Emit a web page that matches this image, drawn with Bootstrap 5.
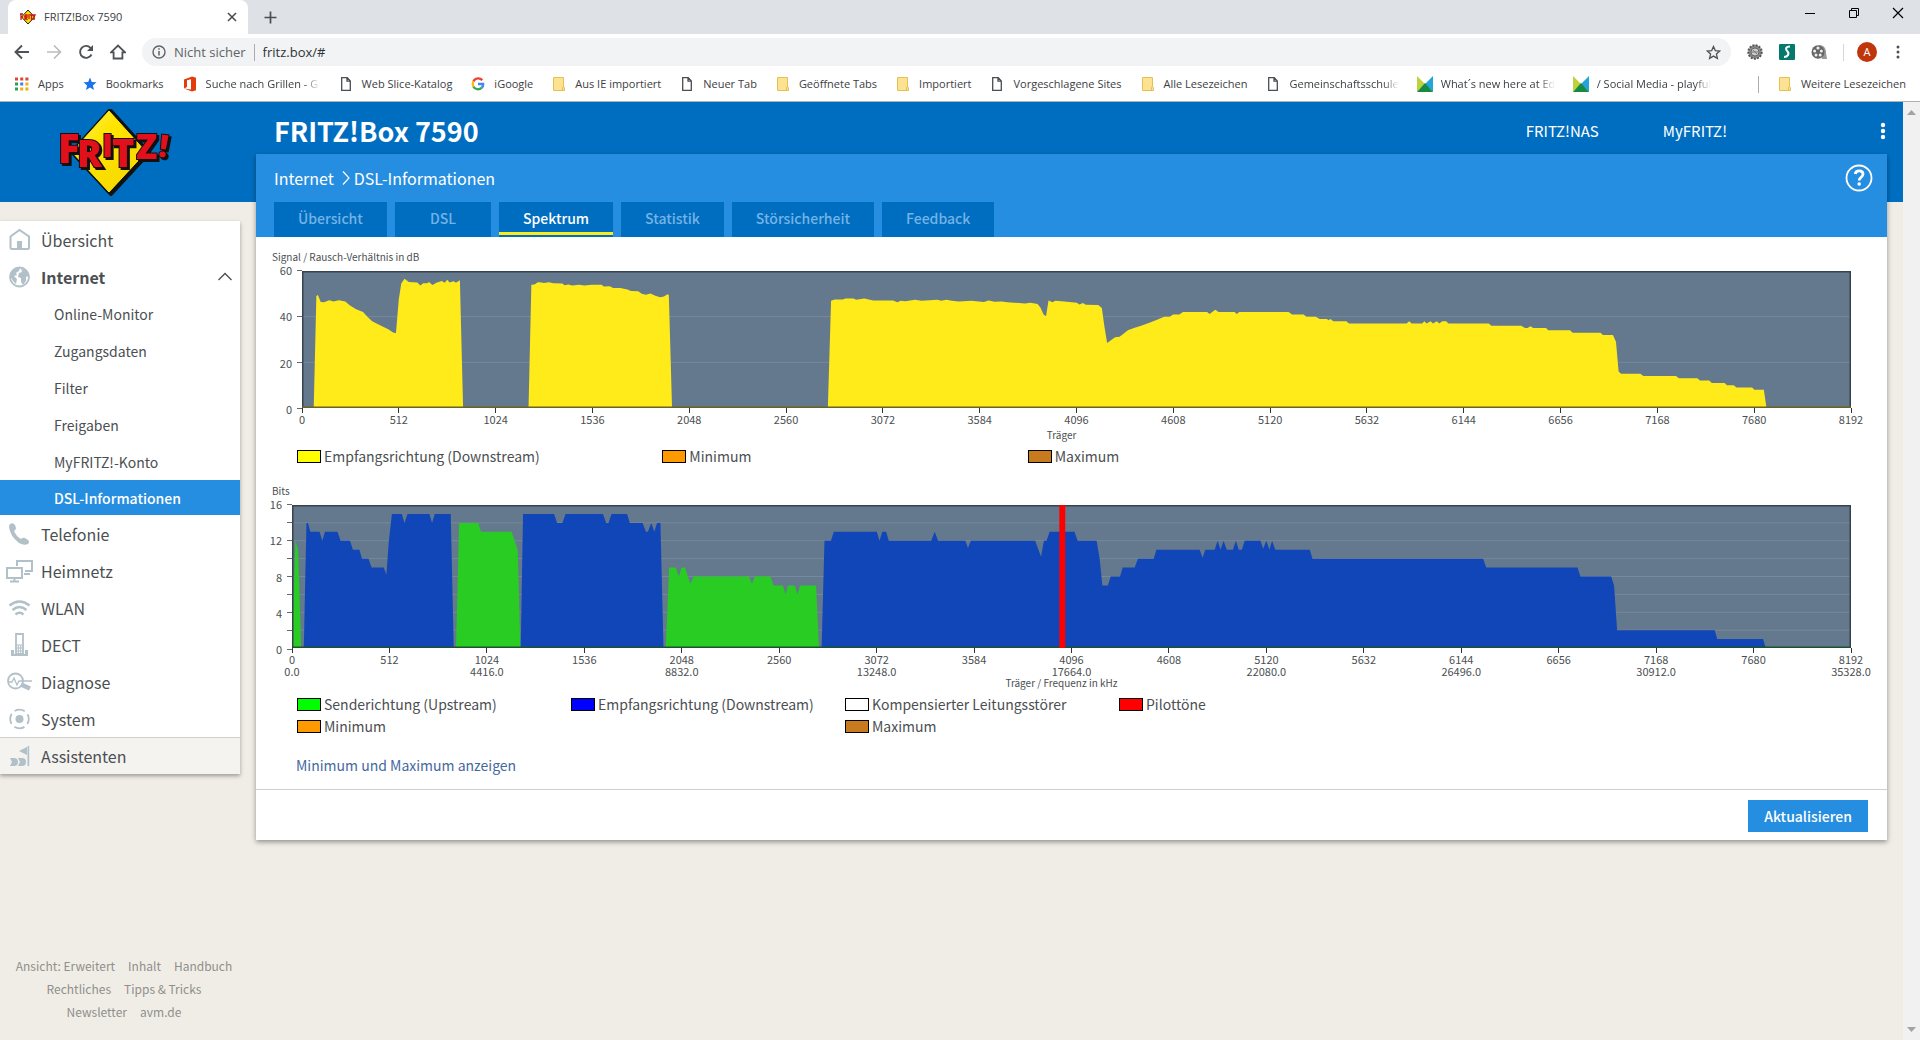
<!DOCTYPE html>
<html lang="de">
<head>
<meta charset="utf-8">
<meta name="viewport" content="width=device-width, initial-scale=1">
<title>FRITZ!Box 7590</title>
<link href="https://cdn.jsdelivr.net/npm/bootstrap@5.3.0/dist/css/bootstrap.min.css" rel="stylesheet">
<style>
:root{--fb-dark:#006ec0;--fb-light:#268ee0;--fb-text:#4b4f52;--fb-icon:#b2c0c8;}
body{font-family:"Noto Sans CJK SC","Noto Sans",sans-serif;font-size:14px;line-height:22px;color:var(--fb-text);background:#f0ede6;}
svg{display:block;flex-shrink:0}
a{text-decoration:none}
/* browser frame */
.chrome-ui{font-family:"Open Sans","Noto Sans",sans-serif;font-size:11px;line-height:16px;color:#3c4043;background:#fff;border-bottom:1px solid #b0b3b6}
.chrome-ui button{background:none;border:0;padding:0;color:#5f6368}
.tab-strip{height:34px;background:#dee1e6;padding-left:8px}
.browser-tab{width:240px;background:#fff;border-radius:8px 8px 0 0;padding:0 10px 0 12px}
.win-buttons{gap:32px;padding-right:16px}
.chrome-ui .win-buttons button{color:#000}
.tool-row{height:36px;padding:4px 14px}
.tool-group{gap:13px}
.omnibox{height:28px;border-radius:14px;background:#f1f3f4;padding:0 10px;color:#5f6368;font-size:13px}
.omnibox input{border:0;background:none;outline:0;padding:0;color:#303336;min-width:0}
.vline{width:1px;height:17px;background:#a9adb1}
.bookmark-row{height:31px;padding:0 14px 3px;gap:18px}
.bookmark-row a{color:#3c4043;display:flex;align-items:center;gap:8px;white-space:nowrap}
.cut span{max-width:114px;overflow:hidden;-webkit-mask-image:linear-gradient(90deg,#000 86%,transparent);mask-image:linear-gradient(90deg,#000 86%,transparent)}
.scroll-rail{width:17px;background:#f1f1f1;padding:6px 0}
/* router page */
.fb-page{background:linear-gradient(var(--fb-dark) 100px,transparent 100px)}
.fb-side{width:240px;flex-shrink:0}
.fb-logo{height:100px;margin-bottom:19px;padding-left:52px}
.fb-menu{background:#fff;box-shadow:0 2px 4px rgba(0,0,0,.35);font-size:16px}
.fb-menu a{display:flex;align-items:center;height:37px;color:var(--fb-text);padding-left:6px;gap:8px}
.fb-menu .sub{padding-left:54px;font-size:14px}
.fb-menu .sub.active{height:35px;background:var(--fb-light);color:#fff;font-weight:500}
.fb-menu .assist{background:#f4f3f0;border-top:1px solid #cfcfcf}
.side-foot{font-size:12px;line-height:23px;padding:0 4px 17px 12px;column-gap:13px}
.side-foot a{color:#8f8f8c}
.fb-main{margin:0 16px 0 16px}
.fb-top{height:52px;padding:6px 1px 0 18px;font-size:15px}
.fb-top h1{font-size:27px;line-height:40px;font-weight:700}
.fb-top a{color:#fff}
.fb-top .shortcuts{gap:64px;margin-right:153px}
.fb-card{background:#fff;box-shadow:0 2px 5px rgba(0,0,0,.4)}
.fb-head{background:var(--fb-light);padding:0 14px 0 18px}
.crumbs{height:48px;font-size:16px}
.crumbs a,.crumbs span{color:#fff}
.fb-tabs{gap:8px}
.fb-tabs a{height:35px;padding:5px 24px;background:var(--fb-dark);color:#74b3e6;font-weight:500}
.fb-tabs a.active{color:#fff;background:linear-gradient(#0000 30px,#ffeb19 30px,#ffeb19 33px,#0000 33px) var(--fb-dark)}
.fb-tabs .short{padding:5px 35px}
.fb-body{padding:12px 36px 13px 16px}
.axis-name{font-size:10px;line-height:16px;margin-bottom:6px}
.ticks{font-size:11px;line-height:12px}
.y-axis{width:30px;margin-top:-1px;margin-bottom:-1px}
.chart-bits .y-axis{width:20px}
.y-axis div{height:0;display:flex;align-items:center;justify-content:flex-end;gap:5px}
.y-axis div::after{content:"";width:5px;height:1px;background:#667;flex-shrink:0}
.plot{height:137px}
.chart-bits .plot{height:143px}
.x-axis{margin-left:30px}
.chart-bits .x-axis{margin-left:20px}
.x-axis div{width:0;display:flex;flex-direction:column;align-items:center}
.x-axis div::before{content:"";width:1px;height:5px;background:#333}
.x-name{font-size:10px;line-height:12px}
.legend-box{margin-left:25px;width:1096px;max-width:100%}
.legend-box .item{display:flex;align-items:center;gap:3px}
.legend-box .w-33{width:33.333%}
.chip{width:24px;height:13px;border:1px solid #000}
.btn-fb{background:var(--fb-light);color:#fff;border:0;border-radius:0;font-size:14px;line-height:22px;padding:5px 16px;font-weight:500}
.mm-link{color:#44699f;margin-left:24px;margin-top:17px}
.fb-foot{border-top:1px solid #cfcfcf;padding:10px 19px 8px}
</style>
<script src="https://cdn.jsdelivr.net/npm/bootstrap@5.3.0/dist/js/bootstrap.bundle.min.js"></script>
</head>
<body class="d-flex flex-column min-vh-100">

<svg width="0" height="0" class="position-absolute" aria-hidden="true">
  <symbol id="i-page" viewBox="0 0 16 16"><path d="M3.7 1.7h5.600l3 3.200v9.400H3.700z M9 1.700v3.500h3.300" fill="none" stroke="#4a4d51" stroke-width="1.300"/></symbol>
  <symbol id="i-folder" viewBox="0 0 16 16"><path d="M2.500 1.500h10v9l1 1.500v2.500h-11z" fill="#fde293" stroke="#e3c04f"/><path d="M11.500 14.500v-3l1-1.500" fill="none" stroke="#e3c04f"/></symbol>
  <symbol id="i-tri" viewBox="0 0 16 16"><path d="M0 0l8 8-8 8z" fill="#bfd23b"/><path d="M16 0L8 8l8 8z" fill="#25a4dc"/><path d="M0 16l8-9 8 9z" fill="#158a43"/></symbol>
</svg>

<header class="chrome-ui">
  <div class="tab-strip d-flex align-items-stretch">
    <div class="browser-tab d-flex align-items-center">
      <svg width="16" height="16" viewBox="0 0 16 16"><path d="M8 1l6.500 7L8 15 1.500 8z" fill="#ffdd00" stroke="#222"/><path d="M0 5h3M1 5v6M1 8h2M5 6v5M5 6h2v2H5l2.500 3M9 5v5M10 6h3M11.500 6v5M13 6h2l-2 4h2" fill="none" stroke="#c8141c" stroke-width="1.300"/></svg>
      <span class="ms-2 flex-grow-1">FRITZ!Box 7590</span>
      <button aria-label="Tab schließen"><svg width="12" height="12" viewBox="0 0 12 12"><path d="M2 2l8 8M10 2l-8 8" stroke="#45494d" stroke-width="1.500"/></svg></button>
    </div>
    <button class="ms-3" aria-label="Neuer Tab"><svg width="13" height="13" viewBox="0 0 13 13"><path d="M6.500 .5v12M.5 6.500h12" stroke="#4a4e52" stroke-width="1.700"/></svg></button>
    <div class="win-buttons d-flex ms-auto pb-2 align-items-center">
      <button aria-label="Minimieren"><svg width="12" height="12" viewBox="0 0 12 12"><path d="M1 6.500h10" stroke="#000"/></svg></button>
      <button aria-label="Verkleinern"><svg width="12" height="12" viewBox="0 0 12 12"><path d="M1.500 3.500h7v7h-7zM3.500 3.500v-2h7v7h-2" fill="none" stroke="#000"/></svg></button>
      <button aria-label="Schließen"><svg width="12" height="12" viewBox="0 0 12 12"><path d="M1 1l10 10M11 1L1 11" stroke="#000" stroke-width="1.200"/></svg></button>
    </div>
  </div>
  <div class="tool-row d-flex align-items-center">
    <button aria-label="Zurück"><svg width="16" height="16" viewBox="0 0 16 16"><path d="M15 8H2M8 1.500L1.500 8 8 14.500" fill="none" stroke="#4e5256" stroke-width="1.900"/></svg></button>
    <button class="ms-3" aria-label="Vor"><svg width="16" height="16" viewBox="0 0 16 16"><path d="M1 8h13M8 1.500L14.500 8 8 14.500" fill="none" stroke="#babcbe" stroke-width="1.700"/></svg></button>
    <button class="ms-3" aria-label="Neu laden"><svg width="16" height="16" viewBox="0 0 16 16"><path d="M13.500 10.500A6 6 0 1 1 12.500 3.800L14 5.500" fill="none" stroke="#4e5256" stroke-width="1.900"/><path d="M15 1v6H9z" fill="#4e5256"/></svg></button>
    <button class="ms-3" aria-label="Startseite"><svg width="16" height="16" viewBox="0 0 16 16"><path d="M1 8.300L8 1.500l7 6.800h-2.600v6.200H3.600V8.300z" fill="none" stroke="#4e5256" stroke-width="1.800"/></svg></button>
    <div class="omnibox d-flex align-items-center flex-grow-1 ms-3">
      <svg width="14" height="14" viewBox="0 0 14 14"><circle cx="7" cy="7" r="6" fill="none" stroke="#5f6368" stroke-width="1.400"/><path d="M7 6v4.500M7 3.300v1.500" stroke="#5f6368" stroke-width="1.500"/></svg>
      <label for="addr" class="mx-2">Nicht sicher</label>
      <span class="vline me-2"></span>
      <input id="addr" type="text" value="fritz.box/#" class="flex-grow-1">
      <button aria-label="Lesezeichen"><svg width="15" height="15" viewBox="0 0 15 15"><path d="M7.500 1.500l1.800 4.100 4.400.4-3.300 3 1 4.400-3.900-2.300-3.900 2.300 1-4.400-3.300-3 4.400-.4z" fill="none" stroke="#4e5256" stroke-width="1.300"/></svg></button>
    </div>
    <div class="d-flex align-items-center gap-3 ms-3">
      <svg width="16" height="16" viewBox="0 0 16 16"><circle cx="8" cy="8" r="6.700" fill="#8b8b8b" stroke="#555" stroke-width="2" stroke-dasharray="2 1.200"/><circle cx="8" cy="8" r="4" fill="#ccc" stroke="#666"/><path d="M5 8h6M6 6l4 4" stroke="#777"/></svg>
      <svg width="16" height="16" viewBox="0 0 16 16"><rect width="16" height="16" rx="1" fill="#07786c"/><path d="M11 2.500c-5 0-4.500 3-2.500 5s.5 5.500-3.500 5.500" fill="none" stroke="#fff" stroke-width="2"/></svg>
      <svg width="16" height="16" viewBox="0 0 16 16"><path d="M8 1q7 0 7 8l1 6h-5z" fill="#999"/><ellipse cx="7" cy="8" rx="6.500" ry="6.700" fill="#666"/><g fill="#eee"><circle cx="7" cy="4" r="1.600"/><circle cx="3.600" cy="7" r="1.500"/><circle cx="10.400" cy="7" r="1.500"/><circle cx="5" cy="11" r="1.500"/><circle cx="9.200" cy="11" r="1.500"/></g></svg>
      <div class="tool-group d-flex align-items-center">
        <span class="vline opacity-50"></span>
        <svg width="20" height="20" viewBox="0 0 20 20"><circle cx="10" cy="10" r="10" fill="#bf360c"/><text x="10" y="14" font-size="11" text-anchor="middle" fill="#fff">A</text></svg>
        <button aria-label="Menü"><svg width="16" height="16" viewBox="0 0 16 16" fill="#4e5256"><circle cx="8" cy="3" r="1.500"/><circle cx="8" cy="8" r="1.500"/><circle cx="8" cy="13" r="1.500"/></svg></button>
      </div>
    </div>
  </div>
  <nav class="bookmark-row d-flex align-items-center">
    <a href="#"><svg width="16" height="16" viewBox="0 0 16 16"><path d="M1 1.500h3v3H1z" fill="#db4437"/><path d="M6.200 1.500h3v3h-3z" fill="#db4437"/><path d="M11.400 1.500h3v3h-3z" fill="#db4437"/><path d="M1 6.500h3v3H1z" fill="#2f9e57"/><path d="M6.200 6.500h3v3h-3z" fill="#3f7fe8"/><path d="M11.400 6.500h3v3h-3z" fill="#eeb012"/><path d="M1 11.500h3v3H1z" fill="#2f9e57"/><path d="M6.200 11.500h3v3h-3zM11.400 11.500h3v3h-3z" fill="#eeb012"/></svg>Apps</a>
    <a href="#"><svg width="16" height="16" viewBox="0 0 16 16"><path d="M8 1.500l1.800 4.400 4.700.4-3.600 3.100 1.100 4.600L8 11.500 4 14l1.100-4.600L1.500 6.300l4.700-.4z" fill="#1a73e8"/></svg>Bookmarks</a>
    <a href="#" class="cut"><svg width="16" height="16" viewBox="0 0 16 16"><path d="M2 3.500L10 .5l4 1.200v12.600L10 15.500 2 12.500l7 1V3.200L5 4.200v6.800l-3 1.500z" fill="#e23c0a"/></svg><span>Suche nach Grillen - Google</span></a>
    <a href="#"><svg width="16" height="16"><use href="#i-page"/></svg>Web Slice-Katalog</a>
    <a href="#"><svg width="16" height="16" viewBox="0 0 16 16" fill="none" stroke-width="2.300"><path d="M12.300 4.200A5.300 5.300 0 0 0 3.400 5.400" stroke="#ea4335"/><path d="M3.400 5.400a5.300 5.300 0 0 0 0 5.200" stroke="#fbbc05"/><path d="M3.400 10.600a5.300 5.300 0 0 0 8.200 1.300" stroke="#34a853"/><path d="M11.600 11.900A5 5 0 0 0 13.200 8H8" stroke="#4285f4"/></svg>iGoogle</a>
    <a href="#"><svg width="16" height="16"><use href="#i-folder"/></svg>Aus IE importiert</a>
    <a href="#"><svg width="16" height="16"><use href="#i-page"/></svg>Neuer Tab</a>
    <a href="#"><svg width="16" height="16"><use href="#i-folder"/></svg>Geöffnete Tabs</a>
    <a href="#"><svg width="16" height="16"><use href="#i-folder"/></svg>Importiert</a>
    <a href="#"><svg width="16" height="16"><use href="#i-page"/></svg>Vorgeschlagene Sites</a>
    <a href="#"><svg width="16" height="16"><use href="#i-folder"/></svg>Alle Lesezeichen</a>
    <a href="#" class="cut"><svg width="16" height="16"><use href="#i-page"/></svg><span>Gemeinschaftsschule</span></a>
    <a href="#" class="cut"><svg width="16" height="16"><use href="#i-tri"/></svg><span>What´s new here at Edu</span></a>
    <a href="#" class="cut"><svg width="16" height="16"><use href="#i-tri"/></svg><span>/ Social Media - playful</span></a>
    <span class="vline ms-auto"></span>
    <a href="#"><svg width="16" height="16"><use href="#i-folder"/></svg>Weitere Lesezeichen</a>
  </nav>
</header>

<div class="d-flex flex-grow-1">
  <div class="fb-page d-flex flex-grow-1">
    <aside class="fb-side d-flex flex-column">
      <a href="#" class="fb-logo d-block" aria-label="FRITZ!">
        <svg width="124" height="98" viewBox="0 0 124 98">
          <defs><linearGradient id="gold" x1="0" y1="0" x2="1" y2="1"><stop offset="0" stop-color="#fff27a"/><stop offset=".35" stop-color="#ffe500"/><stop offset="1" stop-color="#f5d400"/></linearGradient></defs>
          <path d="M59 9L97 51 59 92 21 51z" fill="#111" stroke="#111" stroke-width="4" stroke-linejoin="round"/>
          <path d="M57 8L95 50 57 91 19 50z" fill="url(#gold)" stroke="#111" stroke-width="2" stroke-linejoin="round"/>
          <path d="M57 9L94 50 57 90 20 50z" fill="url(#gold)" stroke="#ffe500" stroke-width="1"/>
          <g font-family="Open Sans" font-weight="800" fill="#e2101b" stroke="#111" stroke-width="2" paint-order="stroke" style="filter:drop-shadow(2px 2px 0 #111)">
            <text x="6" y="61" font-size="40">F</text><text x="25" y="65" font-size="37">R</text><text x="50" y="55" font-size="32">I</text><text x="60" y="65" font-size="38">T</text><text x="84" y="57" font-size="35">Z</text><text x="107" y="55" font-size="31" transform="rotate(8 112 45)">!</text>
          </g>
        </svg>
      </a>
      <nav class="fb-menu">
        <a href="#"><svg width="27" height="24" viewBox="0 0 27 24" fill="none" stroke="#b2c0c8" stroke-width="2"><path d="M4.500 8.500L13.500 2l9.500 6.500v11q0 1.500-1.500 1.500h-15.500q-1.500 0-1.500-1.500z"/><path d="M11 21v-8h5v8z" fill="#b2c0c8" stroke="none"/></svg>Übersicht</a>
        <a href="#" class="fw-bold"><svg width="27" height="24" viewBox="0 0 27 24"><circle cx="13.500" cy="12" r="9.500" fill="none" stroke="#b2c0c8" stroke-width="1.800"/><path d="M5 7l4-4 5 0-1 3-3 2 1 2-3 1 3 3-1 5-3-3-3-5zM15 4l5 1 3 6-3 1 0 4-3 4-2-3 0-4-3-1 1-4 3-1z" fill="#b2c0c8"/></svg>Internet
          <svg class="ms-auto me-2" width="14" height="9" viewBox="0 0 14 9"><path d="M.5 8L7 1.500 13.500 8" fill="none" stroke="#4b4f52" stroke-width="1.300"/></svg></a>
        <a href="#" class="sub">Online-Monitor</a>
        <a href="#" class="sub">Zugangsdaten</a>
        <a href="#" class="sub">Filter</a>
        <a href="#" class="sub">Freigaben</a>
        <a href="#" class="sub">MyFRITZ!-Konto</a>
        <a href="#" class="sub active">DSL-Informationen</a>
        <a href="#"><svg width="27" height="24" viewBox="0 0 27 24"><path d="M4 2q3-2 5 1l1 3q0 2-2 3 2 5 7 8 2-2 4-1l3 2q2 2 0 4-4 2-9-1Q4 14 3 5 3 3 4 2z" fill="#b2c0c8"/></svg>Telefonie</a>
        <a href="#"><svg width="27" height="24" viewBox="0 0 27 24" fill="none" stroke="#b2c0c8" stroke-width="2"><path d="M11 7V2h15v10h-7M18 15h6M1 9h15v10H1zM8.500 19v3M4 22.500h9"/></svg>Heimnetz</a>
        <a href="#"><svg width="27" height="24" viewBox="0 0 27 24" fill="none" stroke="#b2c0c8" stroke-width="2.500"><path d="M3.500 9.500q10-8 20 0M6.500 14q7-6 14 0M9.500 18.500q4-3.500 8 0"/></svg>WLAN</a>
        <a href="#"><svg width="27" height="26" viewBox="0 0 27 26" fill="none" stroke="#b2c0c8"><path d="M10 2h7v20h-7z" stroke-width="1.800"/><path d="M10 13h7M12.300 13v9M14.700 13v9M10 16h7M10 19h7"/><path d="M8 18H5v6h17v-6h-3v4H8z" fill="#b2c0c8" stroke="none"/></svg>DECT</a>
        <a href="#"><svg width="27" height="24" viewBox="0 0 27 24" fill="none" stroke="#b2c0c8"><circle cx="9.500" cy="11" r="7.500" stroke-width="1.800"/><path d="M3 12h3l2-4 3 7 2-4h13" stroke-width="1.300"/><path d="M15 14.500l9 4" stroke-width="4.500"/></svg>Diagnose</a>
        <a href="#"><svg width="27" height="24" viewBox="0 0 27 24"><circle cx="13.500" cy="12" r="4" fill="#b2c0c8"/><circle cx="13.500" cy="12" r="9.300" fill="none" stroke="#b2c0c8" stroke-width="1.800" stroke-dasharray="10.600 4" stroke-dashoffset="5.300"/></svg>System</a>
        <a href="#" class="assist"><svg width="27" height="24" viewBox="0 0 27 24" fill="#b2c0c8"><path d="M21.500 2h1.700v20h-1.700zM21 3v8l-8-4zM4 14h4q4 0 4 4t-4 4H4l2-4zM12 14h4q4 0 4 4t-4 4h-4l2-4z"/></svg>Assistenten</a>
      </nav>
      <div class="side-foot d-flex flex-wrap justify-content-center mt-auto">
        <a href="#">Ansicht: Erweitert</a><a href="#">Inhalt</a><a href="#">Handbuch</a><a href="#">Rechtliches</a><a href="#">Tipps &amp; Tricks</a>
        <span class="w-100"></span><a href="#">Newsletter</a><a href="#">avm.de</a>
      </div>
    </aside>

    <div class="fb-main flex-grow-1">
      <div class="fb-top d-flex align-items-center text-white">
        <h1 class="m-0 me-auto">FRITZ!Box 7590</h1>
        <nav class="shortcuts d-flex"><a href="#">FRITZ!NAS</a><a href="#">MyFRITZ!</a></nav>
        <button class="btn p-0 border-0" aria-label="Menü"><svg width="6" height="18" viewBox="0 0 6 18" fill="#fff"><circle cx="3" cy="3" r="2.200"/><circle cx="3" cy="9" r="2.200"/><circle cx="3" cy="15" r="2.200"/></svg></button>
      </div>
      <main class="fb-card">
        <div class="fb-head">
          <div class="crumbs d-flex align-items-center">
            <a href="#">Internet</a>
            <svg class="ms-2 me-1" width="8" height="14" viewBox="0 0 8 14"><path d="M1 .5L7 7l-6 6.500" fill="none" stroke="#fff" stroke-width="1.200"/></svg>
            <span>DSL-Informationen</span>
            <a href="#" class="ms-auto" aria-label="Hilfe"><svg width="28" height="28" viewBox="0 0 28 28"><circle cx="14" cy="14" r="12.500" fill="none" stroke="#fff" stroke-width="1.800"/><path d="M10.200 10q.5-3.200 4-3.200 3.800 0 3.800 3.200 0 2-2 3.300-1.800 1.200-1.800 3.200" fill="none" stroke="#fff" stroke-width="2.800"/><circle cx="14.200" cy="20" r="1.800" fill="#fff"/></svg></a>
          </div>
          <nav class="fb-tabs d-flex">
            <a href="#">Übersicht</a><a href="#" class="short">DSL</a><a href="#" class="active">Spektrum</a><a href="#">Statistik</a><a href="#">Störsicherheit</a><a href="#">Feedback</a>
          </nav>
        </div>
        <div class="fb-body">
          <section class="chart-snr">
            <div class="axis-name">Signal / Rausch-Verhältnis in dB</div>
            <div class="d-flex">
              <div class="y-axis ticks d-flex flex-column justify-content-between"><div>60</div><div>40</div><div>20</div><div>0</div></div>
              <svg id="snr" class="plot flex-grow-1" width="1" viewBox="0 0 8192 60" preserveAspectRatio="none"></svg>
            </div>
            <div class="x-axis ticks d-flex justify-content-between" data-axis="car"></div>
            <div class="x-name text-center mt-1">Träger</div>
            <div class="legend-box d-flex mt-1">
              <div class="item w-33"><span class="chip" style="background:#ff0"></span>Empfangsrichtung (Downstream)</div>
              <div class="item w-33"><span class="chip" style="background:#f90"></span>Minimum</div>
              <div class="item w-33"><span class="chip" style="background:#c87a1e"></span>Maximum</div>
            </div>
          </section>
          <section class="chart-bits mt-3">
            <div class="axis-name">Bits</div>
            <div class="d-flex">
              <div class="y-axis ticks d-flex flex-column justify-content-between"><div>16</div><div></div><div>12</div><div></div><div>8</div><div></div><div>4</div><div></div><div>0</div></div>
              <svg id="bits" class="plot flex-grow-1" width="1" viewBox="0 0 8192 16" preserveAspectRatio="none"></svg>
            </div>
            <div class="x-axis ticks d-flex justify-content-between" data-axis="freq"></div>
            <div class="x-name text-center">Träger / Frequenz in kHz</div>
            <div class="legend-box row g-0 mt-1">
              <div class="item col-3"><span class="chip" style="background:#0f0"></span>Senderichtung (Upstream)</div>
              <div class="item col-3"><span class="chip" style="background:#00f"></span>Empfangsrichtung (Downstream)</div>
              <div class="item col-3"><span class="chip" style="background:#fff"></span>Kompensierter Leitungsstörer</div>
              <div class="item col-3"><span class="chip" style="background:#f00"></span>Pilottöne</div>
              <div class="item col-6"><span class="chip" style="background:#f90"></span>Minimum</div>
              <div class="item col-6"><span class="chip" style="background:#c87a1e"></span>Maximum</div>
            </div>
          </section>
          <a href="#" class="mm-link d-inline-block">Minimum und Maximum anzeigen</a>
        </div>
        <div class="fb-foot d-flex justify-content-end"><button type="button" class="btn btn-fb">Aktualisieren</button></div>
      </main>
    </div>
  </div>
  <div class="scroll-rail d-flex flex-column justify-content-between align-items-center">
    <svg width="9" height="9" viewBox="0 0 9 9"><path d="M0 7l4.500-5L9 7z" fill="#a3a3a3"/></svg>
    <svg width="9" height="9" viewBox="0 0 9 9"><path d="M0 2l4.500 5L9 2z" fill="#a3a3a3"/></svg>
  </div>
</div>

<script>
// Each list holds "carrier value" pairs of one spectrum outline.
const snr = `62 0,76 49,84 49.5,99 46.4,116 46.3,144 47.2,167 46.6,195 47.2,229 46.6,252 45,286 43.2,323 42,346 40,371 38,418 36,456 34.5,484 33,497 32.8,512 47.6,525 54.5,542 56.6,565 55.2,610 55,626 53.7,641 54.6,663 54.6,671 55.2,690 53.9,711 54.9,739 55.6,754 54.9,769 56.2,780 55,803 55.5,814 54.9,835 56,852 0,
1198 0,1213 54,1230 54.1,1247 55.1,1268 55,1279 54.7,1306 55.1,1328 54.6,1377 54.5,1389 53.8,1409 54.1,1428 53.6,1466 54,1494 53.6,1532 54,1585 54,1596 53.2,1627 53.3,1646 52.6,1683 52.6,1721 51.9,1740 51.2,1778 51.1,1797 50,1819 49.6,1842 50.2,1872 49,1895 48.5,1914 48.8,1933 49.8,1940 49.5,1957 0,
2781 0,2798 47,2817 47.5,2860 47.5,2874 48,2917 48,2930 47.4,2974 48,3021 47.1,3125 47.1,3149 46.3,3166 47,3191 46.7,3242 47.4,3276 47,3361 47.4,3380 47,3408 47.4,3436 47,3474 46.6,3540 47,3606 46.4,3631 47.1,3663 46.5,3701 46.6,3729 46.3,3767 46.1,3824 45.8,3852 46.1,3890 45.5,3905 44,3922 41,3935 40.2,3948 47.1,3969 46.3,3984 47,4031 46.6,4098 46.1,4111 45.3,4130 46,4145 45.2,4211 45.1,4230 43.8,4243 36,4258 28.5,4300 31,4324 31.2,4368 34,4400 35,4438 36,4485 37.5,4522 38.7,4560 40,4589 40,4607 41,4640 41,4659 42,4787 42,4800 41.2,4830 43,4847 42,4932 42,4944 41.2,4957 42,5218 42,5236 41,5297 41,5312 40,5361 40,5382 39,5420 39,5429 38.4,5439 39,5454 38,5523 38,5537 37,5842 37,5855 38,5869 37,5924 37,5936 38,5947 37,5969 38,5981 37,6002 38,6014 37,6031 38,6051 38,6063 37,6276 37,6290 36,6448 36,6468 35,6481 35,6497 35.8,6511 35,6579 35,6591 34,6706 34,6720 33,6867 33,6880 32,6933 32,6949 29,6963 16,6976 15,7078 15,7094 14,7266 14,7282 13,7379 13,7393 12,7442 12,7456 11,7524 11,7536 10,7571 10,7587 9,7669 9,7681 8,7731 8,7745 0`;
const up = `0 0,18 12,32 11,48 0,862 0,878 14,979 14,993 13,1154 13,1186 11,1200 0,1964 0,1982 9,2017 9,2033 8,2047 9,2065 9,2093 7.2,2111 8,2401 8,2417 7.2,2431 8,2513 8,2531 7,2580 7,2594 6,2606 7,2642 7,2656 6,2670 7,2754 7,2769 0`;
const down = `62 0,76 14,84 14,96 13,145 13,159 12,173 13,239 13,255 12,305 12,320 11,354 11,368 10,402 10,418 9,482 9,496 8.2,509 12,525 15,577 15,591 14,607 15,722 15,736 14,750 15,834 15,850 0,
1202 0,1214 15,1377 15,1393 14,1421 14,1437 15,1634 15,1651 14,1663 14,1679 15,1761 15,1775 14,1842 14,1860 13,1870 13,1888 14,1904 13,1918 14,1936 14,1952 0,
2783 0,2798 12,2832 12,2847 13,3073 13,3087 12,3102 13,3122 13,3136 12,3359 12,3377 13,3395 12,3538 12,3552 11.2,3567 12,3905 12,3936 10.2,3951 12,3965 12,3981 13,4112 13,4128 12,4228 12,4244 10,4258 7,4287 7,4302 8,4351 8,4365 9,4428 9,4445 10,4528 10,4542 11,4769 11,4785 10.1,4799 11,4848 11,4864 12,4879 11,4895 12,4912 11,4944 11,4960 12,4975 11,4991 11,5006 12,5089 12,5103 11.1,5120 12,5136 11,5150 12,5167 11,5348 11,5362 10,6259 10,6275 9,6755 9,6770 8,6932 8,6947 7,6963 2,7476 2,7489 1,7730 1,7744 0`;

function area(list, max, color) {
  const pts = list.split(",").map(p => p.trim().split(" ")).map(([c, v]) => c + "," + (max - v)).join(" ");
  return `<polygon points="0,${max} ${pts} 8192,${max}" fill="${color}"/>`;
}
function draw(id, max, step, areas, base) {
  let s = `<rect width="8192" height="${max}" fill="#64798e"/>`;
  for (let v = step; v < max; v += step) s += `<path d="M0 ${v}H8192" stroke="#fff" stroke-opacity=".12" vector-effect="non-scaling-stroke"/>`;
  s += areas;
  s += `<path d="M0 ${max}V0H8192V${max}" fill="none" stroke="#36424c" stroke-width="3" vector-effect="non-scaling-stroke"/>`;
  s += `<path d="M0 ${max}H8192" stroke="${base}" stroke-width="3" vector-effect="non-scaling-stroke"/>`;
  document.getElementById(id).innerHTML = s;
}
draw("snr", 60, 20, area(snr, 60, "#ffeb19"), "#6a6420");
draw("bits", 16, 2, area(up, 16, "#28cc22") + area(down, 16, "#1146b8"), "#1c5230");
document.getElementById("bits").insertAdjacentHTML("beforeend", `<rect x="4032" width="31" height="16" fill="#f00"/>`);

document.querySelectorAll("[data-axis]").forEach(axis => {
  for (let c = 0; c <= 8192; c += 512) {
    const khz = axis.dataset.axis === "freq" && c % 1024 === 0 ? `<span>${(c * 4.3125).toFixed(1)}</span>` : "";
    axis.insertAdjacentHTML("beforeend", `<div><span>${c}</span>${khz}</div>`);
  }
});
</script>
</body>
</html>
